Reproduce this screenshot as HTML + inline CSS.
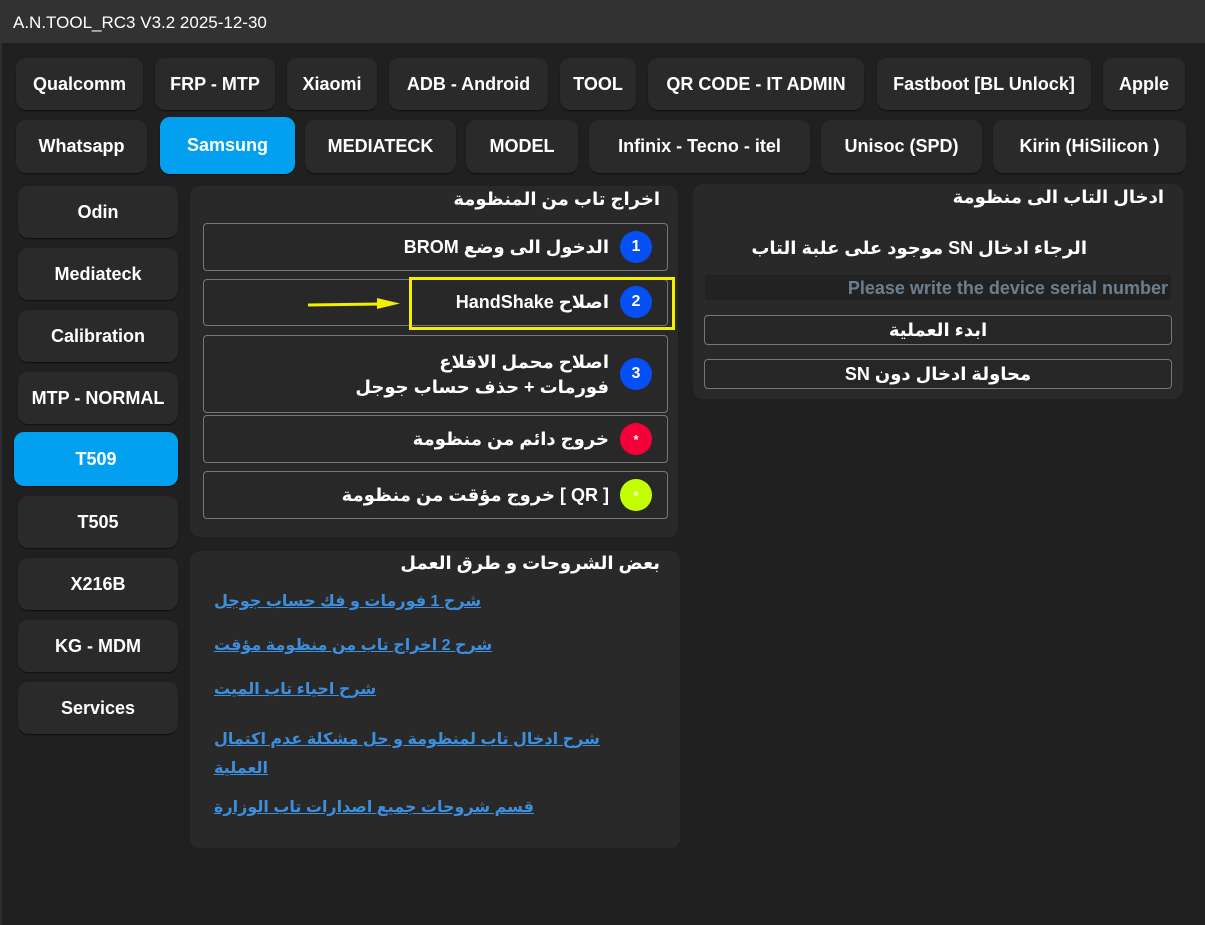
<!DOCTYPE html>
<html><head><meta charset="utf-8"><style>
*{margin:0;padding:0;box-sizing:border-box}
body{width:1205px;height:925px;background:#202020;position:relative;overflow:hidden;font-family:"Liberation Sans","DejaVu Sans",sans-serif;color:#fff}
.a{position:absolute}
.tb{left:0;top:0;width:1205px;height:43px;background:#323232;font-size:17px;padding:13px 0 0 13px;color:#fff}
.b{position:absolute;background:#2a2a2a;border-radius:10px;box-shadow:0 1px 1px #111;display:flex;align-items:center;justify-content:center;font-weight:bold;font-size:18px;color:#fff;white-space:nowrap}
.sel{background:#03a0f0}
.p{position:absolute;background:#292929;border-radius:10px}
.it{position:absolute;left:203px;width:465px;border:1px solid #777;border-radius:4px;background:#282828;direction:rtl;display:flex;align-items:center;padding-right:58px;font-weight:bold;font-size:18px}
.c{position:absolute;width:32px;height:32px;border-radius:50%;left:620px;display:flex;align-items:center;justify-content:center;font-weight:bold;font-size:16px}
.h{position:absolute;direction:rtl;font-weight:bold;font-size:18px;white-space:nowrap}
.ln{position:absolute;left:214px;color:#3d8fde;text-decoration:underline;font-weight:bold;font-size:16px;direction:rtl;white-space:nowrap}
.ob{position:absolute;left:704px;width:468px;border:1px solid #777;border-radius:4px;background:#262626;text-align:center;font-weight:bold;font-size:18px;direction:rtl}
</style></head><body>
<div class="a tb">A.N.TOOL_RC3 V3.2 2025-12-30</div>
<div class="a" style="left:0;top:43px;width:1205px;height:882px;border-left:2px solid #2e2e2e"></div>

<div class="b" style="left:16px;top:58px;width:127px;height:52px">Qualcomm</div>
<div class="b" style="left:155px;top:58px;width:120px;height:52px">FRP - MTP</div>
<div class="b" style="left:287px;top:58px;width:90px;height:52px">Xiaomi</div>
<div class="b" style="left:389px;top:58px;width:159px;height:52px">ADB - Android</div>
<div class="b" style="left:560px;top:58px;width:76px;height:52px">TOOL</div>
<div class="b" style="left:648px;top:58px;width:216px;height:52px">QR CODE - IT ADMIN</div>
<div class="b" style="left:877px;top:58px;width:214px;height:52px">Fastboot [BL Unlock]</div>
<div class="b" style="left:1103px;top:58px;width:82px;height:52px">Apple</div>

<div class="b" style="left:16px;top:120px;width:131px;height:53px">Whatsapp</div>
<div class="b sel" style="left:160px;top:117px;width:135px;height:57px">Samsung</div>
<div class="b" style="left:305px;top:120px;width:151px;height:53px">MEDIATECK</div>
<div class="b" style="left:466px;top:120px;width:112px;height:53px">MODEL</div>
<div class="b" style="left:589px;top:120px;width:221px;height:53px">Infinix - Tecno - itel</div>
<div class="b" style="left:821px;top:120px;width:161px;height:53px">Unisoc (SPD)</div>
<div class="b" style="left:993px;top:120px;width:193px;height:53px">Kirin (HiSilicon )</div>

<div class="b" style="left:18px;top:186px;width:160px;height:52px">Odin</div>
<div class="b" style="left:18px;top:248px;width:160px;height:52px">Mediateck</div>
<div class="b" style="left:18px;top:310px;width:160px;height:52px">Calibration</div>
<div class="b" style="left:18px;top:372px;width:160px;height:52px">MTP - NORMAL</div>
<div class="b sel" style="left:14px;top:432px;width:164px;height:54px">T509</div>
<div class="b" style="left:18px;top:496px;width:160px;height:52px">T505</div>
<div class="b" style="left:18px;top:558px;width:160px;height:52px">X216B</div>
<div class="b" style="left:18px;top:620px;width:160px;height:52px">KG - MDM</div>
<div class="b" style="left:18px;top:682px;width:160px;height:52px">Services</div>

<div class="p" style="left:190px;top:186px;width:488px;height:351px"></div>
<div class="h" style="right:545px;top:189px">اخراج تاب من المنظومة</div>
<div class="it" style="top:223px;height:48px">الدخول الى وضع BROM</div>
<div class="it" style="top:279px;height:47px">اصلاح HandShake</div>
<div class="it" style="top:335px;height:78px;line-height:25px;display:block;padding-top:14px">اصلاح محمل الاقلاع<br>فورمات + حذف حساب جوجل</div>
<div class="it" style="top:415px;height:48px">خروج دائم من منظومة</div>
<div class="it" style="top:471px;height:48px">[ QR ] خروج مؤقت من منظومة</div>
<div class="c" style="top:231px;background:#0550f5">1</div>
<div class="c" style="top:286px;background:#0550f5">2</div>
<div class="c" style="top:358px;background:#0550f5">3</div>
<div class="c" style="top:423px;background:#f7003a;font-size:13px">*</div>
<div class="c" style="top:479px;background:#c4ff00;font-size:13px">*</div>
<div class="a" style="left:409px;top:277px;width:266px;height:53px;border:3px solid #f2ef00"></div>
<svg class="a" style="left:305px;top:295px" width="100" height="18"><path d="M3 10 L75 9" stroke="#f2ef00" stroke-width="3"/><path d="M72 3 L95 8.5 L72 14 Z" fill="#f2ef00"/></svg>

<div class="p" style="left:693px;top:184px;width:490px;height:215px"></div>
<div class="h" style="right:41px;top:187px">ادخال التاب الى منظومة</div>
<div class="h" style="right:118px;top:238px">الرجاء ادخال SN موجود على علبة التاب</div>
<div class="a" style="left:705px;top:275px;width:466px;height:25px;background:#222;color:#6d7f8f;font-weight:bold;font-size:18px;text-align:right;padding-right:3px;line-height:26px">Please write the device serial number</div>
<div class="ob" style="top:315px;height:30px;line-height:28px">ابدء العملية</div>
<div class="ob" style="top:359px;height:30px;line-height:28px">محاولة ادخال دون SN</div>

<div class="p" style="left:190px;top:551px;width:490px;height:297px"></div>
<div class="h" style="right:545px;top:553px">بعض الشروحات و طرق العمل</div>
<div class="ln" style="top:591px">شرح 1 فورمات و فك حساب جوجل</div>
<div class="ln" style="top:635px">شرح 2 اخراج تاب من منظومة مؤقت</div>
<div class="ln" style="top:679px">شرح احياء تاب الميت</div>
<div class="ln" style="top:725px;line-height:30px;text-align:left">شرح ادخال تاب لمنظومة و حل مشكلة عدم اكتمال</div>
<div class="ln" style="top:754px;line-height:30px">العملية</div>
<div class="ln" style="top:797px">قسم شروحات جميع اصدارات تاب الوزارة</div>
</body></html>
